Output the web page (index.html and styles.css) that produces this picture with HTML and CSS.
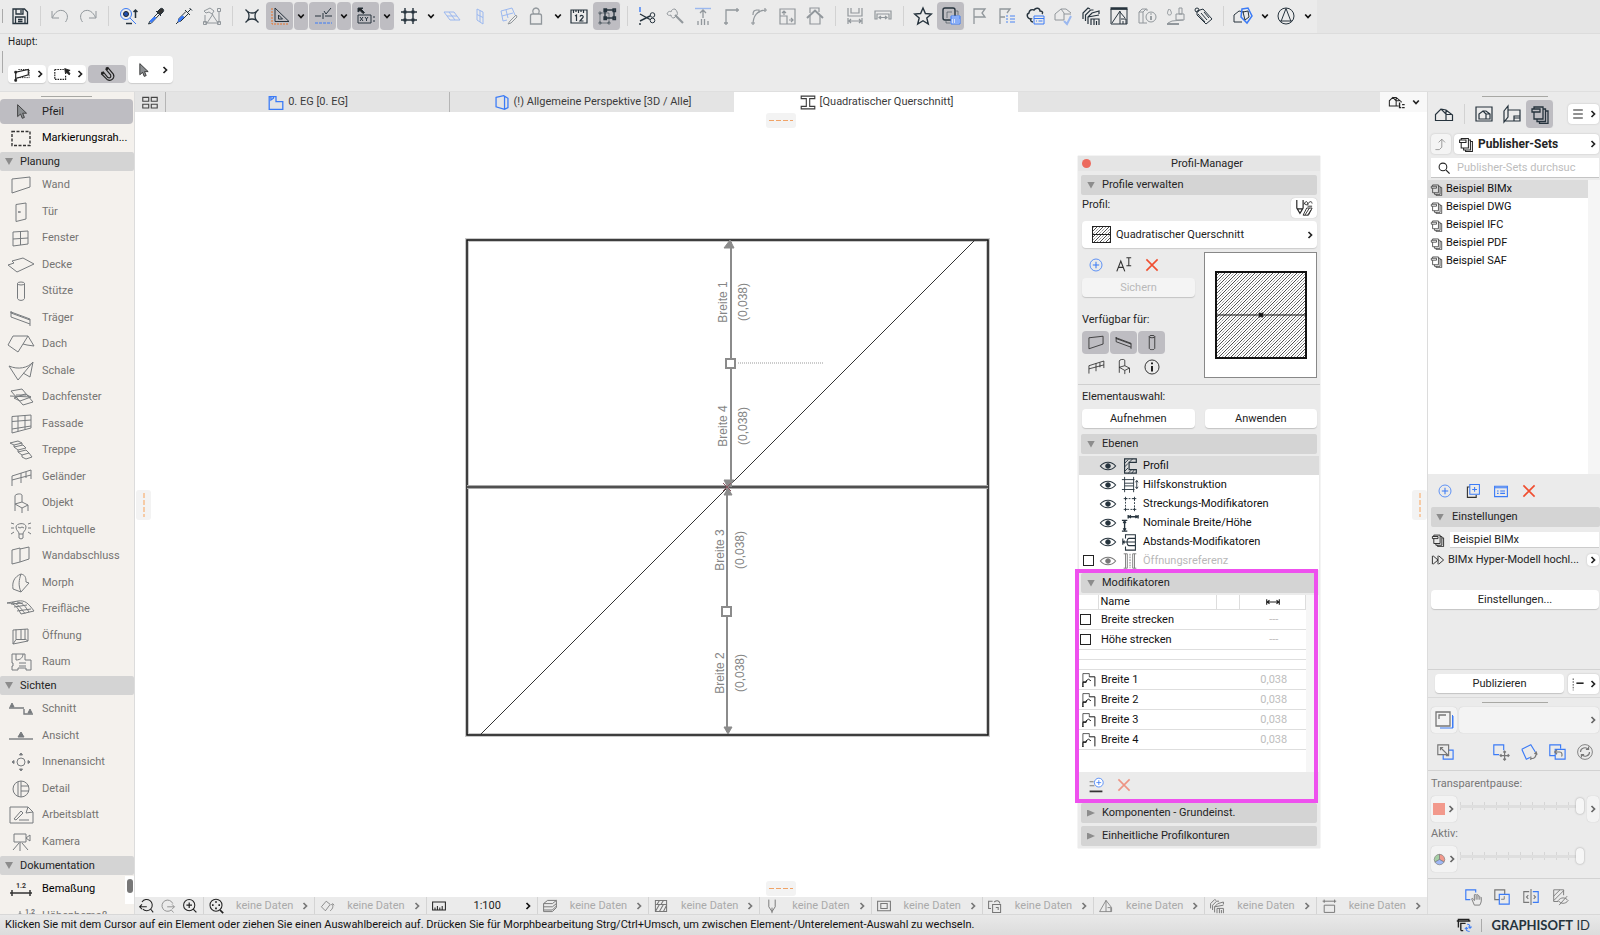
FILE: index.html
```html
<!DOCTYPE html>
<html lang="de">
<head>
<meta charset="utf-8">
<title>Profil-Manager</title>
<link rel="stylesheet" href="styles.css">
</head>
<body>
<svg class="defs" aria-hidden="true">
  <defs>
    <pattern id="hatch" width="6" height="6" patternUnits="userSpaceOnUse"><path d="M-1 7 7-1M-1 1 1-1M5 7 7 5" stroke="#222" stroke-width=".8"/><path d="M-1 4 4-1M2 7 7 2" stroke="#444" stroke-width=".7" stroke-dasharray="2 1.2"/></pattern>
    <symbol id="chev-d" viewBox="0 0 8 8"><path d="M1.2 2.5 4 5.5 6.8 2.5" stroke-width="1.7"/></symbol>
    <symbol id="chev-r" viewBox="0 0 8 8"><path d="M2.5 1 5.5 4 2.5 7" stroke-width="1.7"/></symbol>
    <symbol id="save" viewBox="0 0 20 20"><path d="M3 3h11.500l3 3v11.500H3zM6 3v5h7V3M11 4v3M5.500 17.500V11h9.500v6.500M8 13.500h4.500M8 15.500h4.500" stroke-width="1.300"/></symbol>
    <symbol id="undo" viewBox="0 0 20 20"><path d="M2 5v7h7M2.500 11.500C5 6 9 3 14 5c4 2.500 4.500 7 1.500 11"/></symbol>
    <symbol id="redo" viewBox="0 0 20 20"><path d="M18 5v7h-7M17.500 11.500C15 6 11 3 6 5c-4 2.500-4.500 7-1.500 11"/></symbol>
    <symbol id="findsel" viewBox="0 0 20 20"><circle cx="8" cy="8" r="5.500" class="b"/><circle cx="8" cy="8" r="2.500" fill="#1f4fae" stroke="#222"/><path class="b" d="m12 12 6 6"/><path d="M8 17.500h6M17.500 5v7M15.500 6l2-2 2 2M7 17.500v.1" stroke-width="1.500"/></symbol>
    <symbol id="pick" viewBox="0 0 20 20"><path d="m11 6 3-3c2-2 5 1 3 3l-3 3z" fill="#333"/><path d="M10 5l5 5M12 7l-8 8-1.500 3 3-1L13 9"/><path d="m4 15 4-4 2 1-5 4.500z" fill="#3b7bf6" stroke="#3b7bf6"/></symbol>
    <symbol id="inject" viewBox="0 0 20 20"><path d="m13 7 4-4M15.500 2l2.500 2.500M11 4l5 5M12 5.500l-7 7L4 16l3-1 7-7M4 16l-2 2"/><path d="m5 13 3-3 2 1-4 4-1.500.5z" fill="#3b7bf6" stroke="#3b7bf6"/></symbol>
    <symbol id="hammerbox" viewBox="0 0 20 20"><path d="M3 17V9M17 5v12H3M5 17l6-9M2 5l6-3 4 3-2 3-3-2-3 1zM10 8l6 9M15.500 2.500h3v3h-3zM1.500 15.500h3v3h-3zM15.500 15.500h3v3h-3z"/></symbol>
    <symbol id="snap" viewBox="0 0 20 20"><path d="M6 6q4 2 8 0-2 4 0 8-4-2-8 0 2-4 0-8z" stroke-width="1.300"/><path d="m3.500 3.500 3 3M16.500 3.500l-3 3M3.500 16.500l3-3M16.500 16.500l-3-3" stroke-width="1.300"/></symbol>
    <symbol id="tri" viewBox="0 0 20 20"><path d="M5 2v13.500h14zM8.500 9v4h4z"/><path d="M2 2v16h16" stroke="#e8742c" stroke-dasharray="2 1"/></symbol>
    <symbol id="guide" viewBox="0 0 20 20"><path d="M2 10h6M12 10h7M10 7v6M11 5l2 3 5-6"/><path class="b" d="M2 17h17" stroke-dasharray="3 1"/></symbol>
    <symbol id="coord" viewBox="0 0 20 20"><path d="M2 2h5L5.500 3.500l3 3-1.500 1-3-3L2 6z" fill="#222"/><path d="M2 9h13v8H2zM4 11l3 4M7 11l-3 4M9 11l1.500 2 1.500-2M10.500 13v2M17 11h2M17 15h2"/></symbol>
    <symbol id="grid" viewBox="0 0 20 20"><path d="M6 2v16M14 2v16M2 6h16M2 14h16" stroke-width="1.400"/><path d="M4.500 6h3M12.500 6h3M4.500 14h3M12.500 14h3" stroke-width="3"/></symbol>
    <symbol id="plane" viewBox="0 0 20 20"><path class="b" d="M2 6h10l6 8H8zM5 10h10M7 6l6 8"/></symbol>
    <symbol id="vplane" viewBox="0 0 20 20"><path class="b" d="M7 3l6 3v12l-6-4zM10 4.500V16M7 8.500l6 3"/></symbol>
    <symbol id="eplane" viewBox="0 0 20 20"><path class="b" d="M3 5l11-3 3 7M3 5l2 10 4-1M4 10l11-3M8 4l2 8"/><path d="m18 9-6 6-2 3 3-1 6-6z"/></symbol>
    <symbol id="stamp" viewBox="0 0 20 20"><path d="M8 8C5.500 6 7 2 10 2s4.500 4 2 6M4.500 10q0-2 2-2h7q2 0 2 2v8h-11z" stroke-width="1.300"/></symbol>
    <symbol id="ruler" viewBox="0 0 20 20"><path d="M2 4h16v13H2zM4.500 4v3M7 4v2M9.500 4v3M12 4v2M14.500 4v3M6 10l1.500-1v6M11 10.500c1-2 4-1 3 1L11 15h3.500" stroke-width="1.200"/></symbol>
    <symbol id="groups" viewBox="0 0 20 20"><path opacity=".5" d="M3 7h9v10H3zM2 6h2v2H2zM2 16h2v2H2zM11 16h2v2h-2z"/><path d="M8 4h9v8H8zM7 3h2.500v2.500H7zM16 3h2.500v2.500H16zM7 11h2.500v2.500H7zM16 11h2.500v2.500H16z" stroke-width="1.300"/></symbol>
    <symbol id="scissors" viewBox="0 0 20 20"><path class="b" d="M3 1v5" stroke-width="1.400"/><path d="m3 8 10 5.500M3 15l10-5M3 17v2" stroke-width="1.400"/><circle cx="15.500" cy="9" r="2.300"/><circle cx="15.500" cy="14.500" r="2.300"/></symbol>
    <symbol id="axe" viewBox="0 0 20 20"><path d="M2 8c1-3 3-3 4-2 0-2 2-3 4-3 2 2 3 4 2 6l-3 3c-2 0-3-1-3-3-2 1-3 0-4-1z"/><path d="m10 9 8 8" stroke-width="2.200"/></symbol>
    <symbol id="adjust" viewBox="0 0 20 20"><path class="b" d="M2 2.500h16" stroke-width="1.400"/><path d="M10 4v8M7 7l3-3 3 3M5 15v4M8.500 13v6M11.500 13v6M15 15v4" stroke-width="1.300"/></symbol>
    <symbol id="corner" viewBox="0 0 20 20"><path d="M5 19V4h13M3 17h4M16 2v4" stroke-width="1.300"/></symbol>
    <symbol id="fillet" viewBox="0 0 20 20"><path d="M4 19c0-9 4-15 14-15M2 17h4M16 2v4M4 9c0-4 1-5 5-5M10 7V4H7" stroke-width="1.200"/></symbol>
    <symbol id="resize" viewBox="0 0 20 20"><path d="M3 3h15v15H3zM3 10h7v8M7 9V5M5 7l2-2 2 2M12 14h4M14 12l2 2-2 2" stroke-width="1.200"/></symbol>
    <symbol id="home" viewBox="0 0 20 20"><path d="M2 12 10 4.500l8 7.500" stroke-width="2"/><path d="M5 10v8h10v-8M5 7V2h9v4" stroke-width="1.200"/></symbol>
    <symbol id="dimw" viewBox="0 0 20 20"><path d="M3 2v8h14V2M6 2v5h8V2M3 12v6M17 12v6M4 15h12M6 13l-2 2 2 2M14 13l2 2-2 2" stroke-width="1.200"/></symbol>
    <symbol id="dimi" viewBox="0 0 20 20"><path d="M2 5h16v8h-2V8H4v5H2zM6 11.500h8M8 10 6 11.500l2 1.500M12 10l2 1.500-2 1.500" stroke-width="1.200"/></symbol>
    <symbol id="star" viewBox="0 0 20 20"><path d="m10 2 2.400 5.500 6 .5-4.600 3.900L15.300 18 10 14.700 4.700 18l1.500-6.100L1.600 8l6-.5z" stroke-width="1.400"/></symbol>
    <symbol id="layers" viewBox="0 0 20 20"><path opacity=".5" d="M6 6h5M6 6v6M15 5h2v4M5 15v2h4"/><rect x="2" y="2" width="12" height="12" rx="2" stroke-width="1.400"/><path class="b" d="M10 10h9v8h-9z" fill="#d6e0fa"/><path class="b" d="M10 12h9M12 14h1M14 14h4M12 16h1M14 16h4"/></symbol>
    <symbol id="flag" viewBox="0 0 20 20"><path d="M5 18V3h11l-3 4 3 4H5" stroke-width="1.300"/></symbol>
    <symbol id="flagl" viewBox="0 0 20 20"><path d="M3 18V3h10l-3 4M3 11h5" stroke-width="1.300"/><path class="b" d="M9 10h2M13 10h5M9 13h2M13 13h5M9 16h2M13 16h5" stroke-width="1.800"/></symbol>
    <symbol id="cloud" viewBox="0 0 20 20"><path d="M8 16c-2 0-3-2-2-3-4 0-5-5-2-6 0-3 3-4 5-3 2-3 6-2 6 1 3 0 3 2 2 3" stroke-width="1.400"/><path class="b" d="M9 10h10v8H9zM9 12.500h10M11 15h1M13.500 15h4"/></symbol>
    <symbol id="house" viewBox="0 0 20 20"><path d="M1.500 16.500v-6L7 5l5 5v6.500zM7 5l5 1 6.500 5v5.500H12M12 10.500h6.500M12 6l0 4" stroke-width="1.200"/></symbol>
    <symbol id="housec" viewBox="0 0 20 20"><path d="M2 14V8l6-5 3 4v7zM8 3l5 0 5 4M11 8h7"/><path class="b" d="m11 15 3 3 4-8" stroke-width="2"/></symbol>
    <symbol id="stackh" viewBox="0 0 20 20"><path d="M2 13V7l5-5 2 1M4.500 15V9l5-5 3 0M7 18v-7l4-4 7-2v3M7 11l11-2M10 19v-6h8v6M13 13v6M15.500 15v4" stroke-width="1.200"/></symbol>
    <symbol id="frameh" viewBox="0 0 20 20"><path d="M2 3h16v15H2zM3 17 11 5v13M11 6l5 6M12 13h5v5M14 15v3"/><path d="M1.500 2.500h17" stroke-width="2.500"/></symbol>
    <symbol id="info3d" viewBox="0 0 20 20"><path d="M2 6l3-3h5v2M2 6v11h8M2 6h4v11M6 6l3-3"/><circle cx="14" cy="11" r="5"/><path d="M14 10v4M14 7.500v1" stroke-width="1.800"/></symbol>
    <symbol id="brush" viewBox="0 0 20 20"><path d="M4 3C2 6 2 9 4.500 9S7 6 4.500 3M14 2h3v6h-3zM11 8h8v6h-8zM3 17l4-2 11-1"/><path d="M2 18h12" stroke-width="2"/></symbol>
    <symbol id="tag" viewBox="0 0 20 20"><path d="M4 5l6-2 9 10-6 5-9-9zM5 8l7 8M8 7l6 7M11 6l5 6"/><circle cx="4" cy="4" r="2"/></symbol>
    <symbol id="sheet" viewBox="0 0 20 20"><path d="M1 16V9l5-4 5 1M1 16h8"/><path class="b" d="m9 3 6-1 4 8-5 7-6-6z" stroke-width="1.500"/><path d="m10 6 5-1 1 6-4 3z"/></symbol>
    <symbol id="circtri" viewBox="0 0 20 20"><circle cx="10" cy="10" r="8"/><path d="m10 2.500-5 13M10 2.500l5 13M4 15h12"/></symbol>
    <symbol id="cursor" viewBox="0 0 20 20"><path d="M6 2v14l3.500-3 2 5 2.500-1-2-5h4.500z" fill="#8b8e91"/></symbol>
    <symbol id="poly" viewBox="0 0 20 20"><path d="M3 17V8l14-3v6L3 15" stroke-width="1.300"/><path d="M6 5h12v9H5" stroke-dasharray="1.500 1"/><path d="M2 16h2v2H2zM2 7h2v2H2z" fill="#222"/></symbol>
    <symbol id="boxsel" viewBox="0 0 20 20"><path d="M2 5h10M2 5v11h12v-5" stroke-dasharray="1.800 1" stroke-width="1.300"/><path d="m13 4 6 2-2 1 2 3-1 1-3-3-1 2z" fill="#222"/></symbol>
    <symbol id="magnet" viewBox="0 0 20 20"><path d="m4 10 6 6c5 3 9-2 7-6l-6-7-2 2 5 6c1 3-1 4-3 3L6 8z" stroke-width="1.300"/><path d="M9 3h2v2H9zM4 8h2v2H4z" fill="#222"/></symbol>
    <symbol id="win4" viewBox="0 0 20 20"><path d="M1.500 4h7v4.500h-7zM11.500 4h7v4.500h-7zM1.500 12h7v4.500h-7zM11.500 12h7v4.500h-7z" stroke-width="1.300"/></symbol>
    <symbol id="plan" viewBox="0 0 20 20"><path class="b" d="M2 3h8v6h8v9H2zM4 3v4l3-2V3" stroke-width="1.500"/></symbol>
    <symbol id="box3" viewBox="0 0 20 20"><path class="b" d="M3 4l9-2 5 3v11l-4 2-10-3zM13 3v15" stroke-width="1.500"/></symbol>
    <symbol id="ibeam" viewBox="0 0 20 20"><path d="M2 2.500h16v3h-6v9h6v3H2v-3h6v-9H2z" stroke-width="1.300"/></symbol>
    <symbol id="hmap" viewBox="0 0 20 20"><path d="M1 14V8l4-4 4 4v6zM5 4l4 0 6 5v1M9 4v4h4M9 14h3" stroke-width="1.200"/><path d="M13 10v6h2M16 12.500h3M16 16h3" stroke-width="1.600"/></symbol>
    <symbol id="books" viewBox="0 0 20 20"><path d="M4 8v7h9V3H4v2M13 5h2.500v12.500H7V15M15.500 7H18v12.500H9.500v-2M2 5h8v3H2z" stroke-width="1.300"/></symbol>
    <symbol id="framed" viewBox="0 0 20 20"><path d="M2 3h16v14H2zM5 15v-5l4-3 3 3v5zM9 7h3l4 3v5h-4M12 10h4" stroke-width="1.200"/></symbol>
    <symbol id="layout" viewBox="0 0 20 20"><path d="M2 7l4-5v11l-4 5zM6 6h12v11H2M12 17v-5h6M12 14h6" stroke-width="1.200"/></symbol>
    <symbol id="burger" viewBox="0 0 20 20"><path d="M4 5h12M4 10h12M4 15h12" stroke-width="1.300"/></symbol>
    <symbol id="uparr" viewBox="0 0 20 20"><path d="M3 17h5l3-3V4M7 8l4-4 4 4"/></symbol>
    <symbol id="mag" viewBox="0 0 20 20"><circle cx="8.500" cy="8.500" r="5.500" stroke-width="1.500"/><path d="m13 13 5 5" stroke-width="1.800"/></symbol>
    <symbol id="plusc" viewBox="0 0 20 20"><g class="b"><circle cx="10" cy="10" r="7.500"/><path d="M10 6v8M6 10h8" stroke-width="1.300"/></g></symbol>
    <symbol id="plus2" viewBox="0 0 20 20"><path d="M6 5H3v13h11v-3" stroke-width="1.400"/><path class="b" d="M6 2h12v12H6zM12 5v6M9 8h6" stroke-width="1.300"/></symbol>
    <symbol id="listb" viewBox="0 0 20 20"><path class="b" d="M2 4h16v13H2zM2 6h16M5 10h2M9 10h6M5 13h2M9 13h6" stroke-width="1.400"/></symbol>
    <symbol id="redx" viewBox="0 0 20 20"><path d="M3 3 17 17M17 3 3 17" stroke="#f04e30" stroke-width="2"/></symbol>
    <symbol id="ff" viewBox="0 0 20 20"><path d="M2 4v12M3 4l7 6-7 6M10 4v12M11 4l7 6-7 6" stroke-width="1.300"/></symbol>
    <symbol id="listdots" viewBox="0 0 20 20"><path d="M4 3v15" stroke-dasharray="2 1.500"/><path d="M8 9h9" stroke-width="2"/></symbol>
    <symbol id="trace" viewBox="0 0 20 20"><path class="b" d="M6 18h13V6M18.500 5v13"/><path d="M2 2h14v14H2zM5 9V5h7" stroke-width="1.300"/></symbol>
    <symbol id="tswap" viewBox="0 0 20 20"><path class="b" d="M14 8h5v10H8v-5" stroke-width="1.300"/><path d="M2 2h12v11H2zM5 5l9 9M5 8V5h3M14 11v3h-3" stroke-width="1.300"/></symbol>
    <symbol id="tmove" viewBox="0 0 20 20"><path class="b" d="M13 8V2H2v11h6" stroke-width="1.300"/><path d="M14 9v10M9 14h10M12.500 10.500 14 9l1.500 1.500M12.500 17.500 14 19l1.500-1.500M10.500 12.500 9 14l1.500 1.500M17.500 12.500 19 14l-1.500 1.500" stroke-width="1.300"/></symbol>
    <symbol id="trot" viewBox="0 0 20 20"><path class="b" d="m2 7 10-5 5 8M2 7l5 11 4-2" stroke-width="1.300"/><path d="M12 17c4 1 6-2 6-6M12 15v4M16 12l2-2 1 3" stroke-width="1.300"/></symbol>
    <symbol id="tback" viewBox="0 0 20 20"><path class="b" d="M14 6V2H2v12h6M8 7h11v11H8z" stroke-width="1.300"/><path d="M8 10h5c3 0 3 4 2 5M10 7.500 7.500 10l2.500 2.500" stroke-width="1.300"/></symbol>
    <symbol id="tsync" viewBox="0 0 20 20"><circle cx="10" cy="10" r="8.200"/><path d="M5 10c0-5 6-6 9-3M14 4v3h-3M15 10c0 5-6 6-9 3M6 16v-3h3" stroke-width="1.300"/></symbol>
    <symbol id="thand" viewBox="0 0 20 20"><path class="b" d="M13 5V2H2v11h5" stroke-width="1.300"/><path d="M8.500 12l3 7h6c2-3 2-6 1.500-9M8.500 12c1-1 2 0 3 2V7.500c1-1 2 0 2 1V13M13.500 8c1-1 2-1 2 0v5M15.500 9c1-1 2 0 2 1v3"/></symbol>
    <symbol id="tdup" viewBox="0 0 20 20"><path d="M7 13H2V2h11v5" stroke-width="1.300"/><path class="b" d="M7 7h11v11H7z" stroke-width="1.300"/><path d="M12.500 9v3.500H9"/></symbol>
    <symbol id="tsplit" viewBox="0 0 20 20"><path class="b" d="M12 4h6v12h-6" stroke-width="1.300"/><path d="M8 4H2v12h6M10 1v18M7 8l-2 2 2 2M13 8l2 2-2 2" stroke-width="1.200"/></symbol>
    <symbol id="thide" viewBox="0 0 20 20"><path d="M14 2H3v13h5M14 2v6M3 9l7-7M3 14 14 3M8 14c3-4 8-4 11 0-3 4-8 4-11 0zM9 19l9-10"/></symbol>
    <symbol id="wheel" viewBox="0 0 20 20"><path d="M10 10V2a8 8 0 0 0-7 12z" fill="#a5cfa5"/><path d="M10 10V2a8 8 0 0 1 7 12z" fill="#f2998c"/><path d="M10 10 3 14a8 8 0 0 0 14 0z" fill="#9fb8f5"/></symbol>
    <symbol id="rename" viewBox="0 0 20 20"><path d="m1 18 5-13 5 13M3 13h6" stroke-width="1.400"/><path d="M13 1h6M13 11h6M16 1v10" stroke-width="1.300"/></symbol>
    <symbol id="pencil2" viewBox="0 0 20 20"><path d="M2 1v9l3.500 6L9 10V1M2 11h7" stroke-width="1.300"/><path d="M10 6c2-5 4-3 4-1s-3 2-3 0M14 7c1-5 5-5 5-2M14 8h5M9 18l4-8h6l-4 8zM11 18l5-8M14 18l4-6"/></symbol>
    <symbol id="ico-info" viewBox="0 0 20 20"><circle cx="10" cy="10" r="7.800"/><path d="M10 9v6M10 5v2" stroke-width="2.200"/></symbol>
    <symbol id="eye" viewBox="0 0 20 20"><path d="M1.500 10C6 4.500 14 4.500 18.500 10 14 15.500 6 15.500 1.500 10z" stroke-width="1.200"/><circle cx="10" cy="10" r="2.600" fill="currentColor"/></symbol>
    <symbol id="l-prof" viewBox="0 0 20 20"><path d="M4 2h13v4H9v8h8v4H4z" stroke-width="1.300"/><path d="m4 7 4-4M4 11l4-4M4 16l4-4M9 6l4-4M8 18l4-4M12 18l3-4"/></symbol>
    <symbol id="l-help" viewBox="0 0 20 20"><path d="M4 1v17M1 4h14M1 15h14M14 1v17M4 8h10M4 11h10M17.500 5v9M16 7l1.500-2L19 7M16 12l1.500 2 1.500-2"/></symbol>
    <symbol id="l-str" viewBox="0 0 20 20"><path d="M5 4h10v12H5z" stroke-dasharray="2 1.500"/><path d="M3 4h4M5 2v4M13 4h4M15 2v4M3 16h4M5 14v4M13 16h4M15 14v4"/></symbol>
    <symbol id="l-nom" viewBox="0 0 20 20"><path d="M8 1v4M19 1v4M9 3h9M11 1.500 9 3l2 1.500M16 1.500 18 3l-2 1.500M1 7h6M1 19h6M4 8v10M2.500 10l1.500-2L5.500 10M2.500 16l1.500 2 1.500-2" stroke-width="1.500"/></symbol>
    <symbol id="l-abs" viewBox="0 0 20 20"><path d="M5 6V2h11v17H5v-4M2 6v7M2 10h14M16 6H9c-3 0-3 8 0 8h7M4 8.500 2 10l2 1.500" stroke-width="1.200"/></symbol>
    <symbol id="l-open" viewBox="0 0 20 20"><path d="M5 2v16M7 2v16M13 2v16M15 2v16M3 2h4M3 18h4M13 2h4M13 18h4" /><path d="M10 2v16" stroke-dasharray="2 1"/></symbol>
    <symbol id="hdim" viewBox="0 0 20 20"><path d="M1 6v8M19 6v8M2 10h16M5 7.500 2 10l3 2.500M15 7.500 18 10l-3 2.500" stroke-width="1.600"/></symbol>
    <symbol id="m-flag" viewBox="0 0 20 20"><path d="M3 17V2h8v4M3 12h5" opacity=".7" stroke-width="1.200"/><path d="M2 18h2M11 6h7v12M3 18v-5h4v-2l3-2 3 2" stroke-width="1.200"/></symbol>
    <symbol id="m-add" viewBox="0 0 20 20"><path d="M2 6h5M2 11h6" opacity=".6" stroke-width="1.400"/><path d="M2 18h16" stroke-width="2.200"/><g class="b"><circle cx="13.500" cy="7" r="5.500" fill="#fff"/><path d="M13.500 4v6M10.500 7h6"/></g></symbol>

    <symbol id="t-marq" viewBox="0 0 28 20"><path d="M5 3.500h18v14H5z" stroke-dasharray="3 1.500" stroke-width="1.400"/></symbol>
    <symbol id="t-wall" viewBox="0 0 28 20"><path d="M5 4l18-2v10L5 18z"/></symbol>
    <symbol id="t-door" viewBox="0 0 28 20"><path d="M9 2.500 19 1v16l-10 2.500zM11 10h3M12 9v2"/></symbol>
    <symbol id="t-win" viewBox="0 0 28 20"><path d="M6 4l15-1v13l-15 2zM13.500 3.500v13.500M6 11l15-1"/></symbol>
    <symbol id="t-slab" viewBox="0 0 28 20"><path d="m1 10 6-2-2-2 11-3 11 6-17 8z"/></symbol>
    <symbol id="t-col" viewBox="0 0 28 20"><ellipse cx="14" cy="2.500" rx="3.500" ry="1.500"/><path d="M10.500 2.500v15c1 2.500 6 2.500 7 0v-15"/></symbol>
    <symbol id="t-beam" viewBox="0 0 28 20"><path d="M4 4v5l19 7v-5zM4 5l19 7M3 4h2M22 17h2"/></symbol>
    <symbol id="t-roof" viewBox="0 0 28 20"><path d="M6 2h15L11 18 1 11zM21 2l6 10-7-1-4-1"/></symbol>
    <symbol id="t-shell" viewBox="0 0 28 20"><path d="M2 5c9 4 19 2 24-4L11 19zM26 1l-3 15-7-4"/></symbol>
    <symbol id="t-sky" viewBox="0 0 28 20"><path d="m4 4 11-2 11 13-10 3zM7 11 18 7l6 3-11 4zM9 8l10 0M3 9l21 1"/></symbol>
    <symbol id="t-curt" viewBox="0 0 28 20"><path d="M5 2.500 24 1v13L5 19zM11 2v15.500M18 1.500v14M5 7.500l19-1.500M5 15l19-3"/></symbol>
    <symbol id="t-stair" viewBox="0 0 28 20"><path d="m3 3 8-2 4 2-8 2zM7 5v2l9-2 3 3-8 2-4-3M11 10v2l8-2 3 3-7 2-4-3M15 15v2l4 2 6-2-3-4M15 3v2"/></symbol>
    <symbol id="t-rail" viewBox="0 0 28 20"><path d="M5 19V9l19-6v9M5 13l19-5M14 6v10M19 5v6"/></symbol>
    <symbol id="t-chair" viewBox="0 0 28 20"><path d="M8 18V3c0-2 6-3 7-1v7M8 11l7-2 6 3-6 3zM15 15v5M21 12v6"/></symbol>
    <symbol id="t-light" viewBox="0 0 28 20"><path d="M12 14c0-3-3-3-3-7s10-5 10 0c0 4-3 4-3 7zM12 14v4l2 1 2-1v-4M11 7l2 1 2-1 2 1M4 3l3 1M4 8h3M4 14l3-2M24 3l-3 1M24 8h-3M24 14l-3-2"/></symbol>
    <symbol id="t-wend" viewBox="0 0 28 20"><path d="M5 4l8-2v14l-8 2zM13 3l9-2v12l-9 3"/></symbol>
    <symbol id="t-morph" viewBox="0 0 28 20"><path d="M14 1C7 4 5 9 6 16l8 3c-3-7-2-12 0-18zM14 1c4 1 5 3 5 8l3 1-8 9"/></symbol>
    <symbol id="t-mesh" viewBox="0 0 28 20"><path d="M0 4c5 0 9 1 14 11l13-3C21 4 18 1 11 2zM5 3.500c6 1 8 5 13 11M4 5l12-1M7 8l13-2M10 12l14-2M10 3c6 1 8 4 12 10"/></symbol>
    <symbol id="t-open" viewBox="0 0 28 20"><path d="M6 4l15-1v12l-15 3zM9 3.500v10h9V3M9 13.500 6 18M18 13l3 2M14 3.500v10"/></symbol>
    <symbol id="t-room" viewBox="0 0 28 20"><path d="M5 2h13v6h6v10h-5v-2h-8v2H5v-4h1v-3H5zM9 2v6c5 0 7-3 7-6M12 11h7M12 14h7"/></symbol>
    <symbol id="t-sec" viewBox="0 0 28 20"><path d="M2 9h15M17 10v5h9" stroke-width="1.400"/><path d="m3 8 2-4 2 4zM21 14l2-4 2 4z" fill="currentColor"/></symbol>
    <symbol id="t-elev" viewBox="0 0 28 20"><path d="M2 13h24" stroke-width="1.400"/><path d="m11 11 3-5 3 5z" fill="currentColor"/></symbol>
    <symbol id="t-int" viewBox="0 0 28 20"><circle cx="14" cy="10" r="4"/><path d="m12.500 3 1.500-2 1.500 2zM12.500 17l1.500 2 1.500-2zM7 8.500 5 10l2 1.500zM21 8.500l2 1.500-2 1.500z" fill="currentColor"/></symbol>
    <symbol id="t-det" viewBox="0 0 28 20"><circle cx="14" cy="10" r="8"/><path d="M11 3v14M14 2v16M14 7h8M14 12h8"/></symbol>
    <symbol id="t-work" viewBox="0 0 28 20"><path d="M3 2h18l5 5v11H3zM21 2l-2 6 7-1M7 14l7-8 2 2-7 7zM12 15h10"/></symbol>
    <symbol id="t-cam" viewBox="0 0 28 20"><path d="M7 2h12v8H7zM19 6l4-3v6zM13 10v9M12 11l-6 7M15 11l6 7"/></symbol>
    <symbol id="t-dim" viewBox="0 0 28 20"><path d="M3 14h22M5 11v6M23 11v6" stroke-width="1.500"/></symbol>
    <symbol id="t-lvl" viewBox="0 0 28 20"><circle cx="13" cy="14" r="6"/><path d="M13 5v15M5 14h16"/></symbol>

    <symbol id="v-back" viewBox="0 0 20 20"><path d="M5 5a7 7 0 1 1 1 9M2 11h9M5 8l-3 3 3 3M16 14l3 4" stroke-width="1.300"/></symbol>
    <symbol id="v-fwd" viewBox="0 0 20 20"><path d="M14 15a7 7 0 1 1 2-8M9 11h9M15 8l3 3-3 3M14 15l3 3" stroke-width="1.200"/></symbol>
    <symbol id="v-zoom" viewBox="0 0 20 20"><circle cx="9" cy="9" r="7" stroke-width="1.300"/><path d="M9 5.500v7M5.500 9h7M14 14l4 4" stroke-width="1.500"/></symbol>
    <symbol id="v-fit" viewBox="0 0 20 20"><circle cx="10" cy="9" r="7.500" stroke-width="1.300"/><path d="M10 4v2M10 12v2M5 9h2M13 9h2M15 15l4 4" stroke-width="2.200"/></symbol>
    <symbol id="v-rot" viewBox="0 0 20 20"><path d="m3 11 6-7 5 4-6 8zM14 16c3-2 4-5 3-8M15 9l2-2 2 2"/></symbol>
    <symbol id="v-scale" viewBox="0 0 20 20"><path d="M2 5h16v10H2zM5 12v3M8 10v5M11 12v3M14 10v5" stroke-width="1.300"/></symbol>
    <symbol id="v-lay" viewBox="0 0 20 20"><path d="m2 7 5-4h11l-5 4zM2 11l11 0 5-4M2 15h11l5-5M2 7v10h11l5-5V3" stroke-width="1.200"/></symbol>
    <symbol id="v-hatch" viewBox="0 0 20 20"><path d="M3 3h14v14H3zM3 8h14M5 8l3-5M10 8l3-5M3 17l5-9M8 17l5-9M13 17l4-8" stroke-width="1.300"/></symbol>
    <symbol id="v-pen" viewBox="0 0 20 20"><path d="M6 2v9l4 6 4-6V2M10 12v7" stroke-width="1.200"/></symbol>
    <symbol id="v-frame" viewBox="0 0 20 20"><path d="M2 4h16v12H2zM6 7h8v6H6z" stroke-width="1.300"/></symbol>
    <symbol id="v-rep" viewBox="0 0 20 20"><path d="M7 8h10v10H7zM7 4H2v9h3M9 5c4-3 7-1 7 2M11 12h3v3" stroke-width="1.300"/></symbol>
    <symbol id="v-ren" viewBox="0 0 20 20"><path d="M2 17 10 3l7 9v5zM10 3v14M12 12h4v5"/></symbol>
    <symbol id="v-dim" viewBox="0 0 20 20"><path d="M4 9h13v9H4zM2 4h17M4 2v4M17 2v4" stroke-width="1.200"/></symbol>
    <symbol id="conn" viewBox="0 0 20 20"><path d="M3 13V3h13v3M1 5h17M6 17V8h6M6 17h3" stroke-width="1.700"/><path class="b" d="M14 9c3 0 4 2 3 5M15.500 12l2 2 2-2M17 18c-3 0-5-1-4-4M15 15l-2-2-2 2" stroke-width="1.300"/></symbol>
  </defs>
</svg>

<div class="app">
  <header class="topbar">
    <div class="tools" role="toolbar" aria-label="Standard">
      <i class="grip"></i>
      <button class="tb" aria-label="Sichern"><svg><use href="#save"/></svg></button>
      <i class="sep"></i>
      <button class="tb off" aria-label="Rückgängig"><svg><use href="#undo"/></svg></button>
      <button class="tb off" aria-label="Wiederholen"><svg><use href="#redo"/></svg></button>
      <i class="sep"></i>
      <button class="tb" aria-label="Suchen"><svg><use href="#findsel"/></svg></button>
      <button class="tb" aria-label="Aufnehmen"><svg><use href="#pick"/></svg></button>
      <button class="tb" aria-label="Übertragen"><svg><use href="#inject"/></svg></button>
      <button class="tb off" aria-label="Bearbeiten"><svg><use href="#hammerbox"/></svg></button>
      <i class="sep"></i>
      <button class="tb" aria-label="Fang"><svg><use href="#snap"/></svg></button>
      <button class="tb on" aria-label="Hilfslinien"><svg><use href="#tri"/></svg></button>
      <button class="tb dd on" aria-label="Mehr"><svg><use href="#chev-d"/></svg></button>
      <button class="tb on" aria-label="Fangpunkte"><svg><use href="#guide"/></svg></button>
      <button class="tb dd on" aria-label="Mehr"><svg><use href="#chev-d"/></svg></button>
      <button class="tb on" aria-label="Koordinaten"><svg><use href="#coord"/></svg></button>
      <button class="tb dd on" aria-label="Mehr"><svg><use href="#chev-d"/></svg></button>
      <button class="tb" aria-label="Raster"><svg><use href="#grid"/></svg></button>
      <button class="tb dd" aria-label="Mehr"><svg><use href="#chev-d"/></svg></button>
      <button class="tb off" aria-label="Ebene"><svg><use href="#plane"/></svg></button>
      <button class="tb off" aria-label="Vertikale Ebene"><svg><use href="#vplane"/></svg></button>
      <button class="tb off" aria-label="Ebene bearbeiten"><svg><use href="#eplane"/></svg></button>
      <button class="tb off" aria-label="Schwerkraft"><svg><use href="#stamp"/></svg></button>
      <button class="tb dd" aria-label="Mehr"><svg><use href="#chev-d"/></svg></button>
      <button class="tb" aria-label="Messen"><svg><use href="#ruler"/></svg></button>
      <button class="tb on" aria-label="Gruppen"><svg><use href="#groups"/></svg></button>
      <i class="sep"></i>
      <button class="tb" aria-label="Trennen"><svg><use href="#scissors"/></svg></button>
      <button class="tb off" aria-label="Aufteilen"><svg><use href="#axe"/></svg></button>
      <button class="tb off" aria-label="Anpassen"><svg><use href="#adjust"/></svg></button>
      <button class="tb off" aria-label="Verschneiden"><svg><use href="#corner"/></svg></button>
      <button class="tb off" aria-label="Abrunden"><svg><use href="#fillet"/></svg></button>
      <button class="tb off" aria-label="Größe"><svg><use href="#resize"/></svg></button>
      <button class="tb off" aria-label="Dach"><svg><use href="#home"/></svg></button>
      <i class="sep"></i>
      <button class="tb off" aria-label="Bemaßung außen"><svg><use href="#dimw"/></svg></button>
      <button class="tb off" aria-label="Bemaßung innen"><svg><use href="#dimi"/></svg></button>
      <i class="sep"></i>
      <div class="spread">
        <button class="tb" aria-label="Favoriten"><svg><use href="#star"/></svg></button>
        <button class="tb on" aria-label="Ebenen"><svg><use href="#layers"/></svg></button>
        <button class="tb off" aria-label="Markierung"><svg><use href="#flag"/></svg></button>
        <button class="tb off" aria-label="Markierungsliste"><svg><use href="#flagl"/></svg></button>
        <button class="tb" aria-label="Cloud"><svg><use href="#cloud"/></svg></button>
        <button class="tb off" aria-label="Modellprüfung"><svg><use href="#housec"/></svg></button>
        <button class="tb" aria-label="Varianten"><svg><use href="#stackh"/></svg></button>
        <button class="tb" aria-label="Bild"><svg><use href="#frameh"/></svg></button>
        <button class="tb off" aria-label="Info"><svg><use href="#info3d"/></svg></button>
        <button class="tb off" aria-label="Oberflächen"><svg><use href="#brush"/></svg></button>
        <button class="tb" aria-label="Etikett"><svg><use href="#tag"/></svg></button>
      </div>
      <i class="sep"></i>
      <button class="tb" aria-label="Layout"><svg><use href="#sheet"/></svg></button>
      <button class="tb dd" aria-label="Mehr"><svg><use href="#chev-d"/></svg></button>
      <button class="tb" aria-label="Analyse"><svg><use href="#circtri"/></svg></button>
      <button class="tb dd" aria-label="Mehr"><svg><use href="#chev-d"/></svg></button>
    </div>
  </header>

  <div class="options">
    <div class="options-title">Haupt:</div>
    <div class="options-row">
      <i class="vgrip"></i>
      <button class="pill" aria-label="Polygon"><svg class="i18"><use href="#poly"/></svg><svg class="chev"><use href="#chev-r"/></svg></button>
      <button class="pill" aria-label="Auswahl"><svg class="i18"><use href="#boxsel"/></svg><svg class="chev"><use href="#chev-r"/></svg></button>
      <button class="pill on" aria-label="Magnet"><svg class="i18"><use href="#magnet"/></svg></button>
      <button class="pill tall" aria-label="Pfeil"><svg class="i16"><use href="#cursor"/></svg><svg class="chev"><use href="#chev-r"/></svg></button>
    </div>
  </div>

  <div class="work">
    <nav class="toolbox" aria-label="Werkzeugkasten">
      <i class="handle"></i>
      <button class="tool sel"><svg><use href="#cursor"/></svg>Pfeil</button>
      <button class="tool strong marq"><svg><use href="#t-marq"/></svg>Markierungsrah...</button>
      <h2 class="sect"><i class="tri"></i>Planung</h2>
      <ul class="tool-list">
        <li><button class="tool"><svg><use href="#t-wall"/></svg>Wand</button></li>
        <li><button class="tool"><svg><use href="#t-door"/></svg>Tür</button></li>
        <li><button class="tool"><svg><use href="#t-win"/></svg>Fenster</button></li>
        <li><button class="tool"><svg><use href="#t-slab"/></svg>Decke</button></li>
        <li><button class="tool"><svg><use href="#t-col"/></svg>Stütze</button></li>
        <li><button class="tool"><svg><use href="#t-beam"/></svg>Träger</button></li>
        <li><button class="tool"><svg><use href="#t-roof"/></svg>Dach</button></li>
        <li><button class="tool"><svg><use href="#t-shell"/></svg>Schale</button></li>
        <li><button class="tool"><svg><use href="#t-sky"/></svg>Dachfenster</button></li>
        <li><button class="tool"><svg><use href="#t-curt"/></svg>Fassade</button></li>
        <li><button class="tool"><svg><use href="#t-stair"/></svg>Treppe</button></li>
        <li><button class="tool"><svg><use href="#t-rail"/></svg>Geländer</button></li>
        <li><button class="tool"><svg><use href="#t-chair"/></svg>Objekt</button></li>
        <li><button class="tool"><svg><use href="#t-light"/></svg>Lichtquelle</button></li>
        <li><button class="tool"><svg><use href="#t-wend"/></svg>Wandabschluss</button></li>
        <li><button class="tool"><svg><use href="#t-morph"/></svg>Morph</button></li>
        <li><button class="tool"><svg><use href="#t-mesh"/></svg>Freifläche</button></li>
        <li><button class="tool"><svg><use href="#t-open"/></svg>Öffnung</button></li>
        <li><button class="tool"><svg><use href="#t-room"/></svg>Raum</button></li>
      </ul>
      <h2 class="sect"><i class="tri"></i>Sichten</h2>
      <ul class="tool-list">
        <li><button class="tool"><svg><use href="#t-sec"/></svg>Schnitt</button></li>
        <li><button class="tool"><svg><use href="#t-elev"/></svg>Ansicht</button></li>
        <li><button class="tool"><svg><use href="#t-int"/></svg>Innenansicht</button></li>
        <li><button class="tool"><svg><use href="#t-det"/></svg>Detail</button></li>
        <li><button class="tool"><svg><use href="#t-work"/></svg>Arbeitsblatt</button></li>
        <li><button class="tool"><svg><use href="#t-cam"/></svg>Kamera</button></li>
      </ul>
      <h2 class="sect"><i class="tri"></i>Dokumentation</h2>
      <div class="doc-tools">
        <ul class="tool-list">
          <li><button class="tool strong"><svg viewBox="0 0 28 20"><use href="#t-dim"/><text class="mini" x="14" y="9">1.2</text></svg>Bemaßung</button></li>
          <li><button class="tool"><svg viewBox="0 0 28 20"><use href="#t-lvl"/><text class="mini" x="23" y="8">1.2</text></svg>Höhenbemaß...</button></li>
        </ul>
        <div class="scroll"><i></i></div>
      </div>
    </nav>

    <main class="center">
      <div class="tabs" role="tablist">
        <button class="tab-home" aria-label="Übersicht"><svg><use href="#win4"/></svg></button>
        <button class="tab" role="tab"><svg><use href="#plan"/></svg>0. EG [0. EG]</button>
        <button class="tab" role="tab"><svg><use href="#box3"/></svg>(!) Allgemeine Perspektive [3D / Alle]</button>
        <button class="tab current" role="tab"><svg><use href="#ibeam"/></svg>[Quadratischer Querschnitt]</button>
        <i class="tab-space"></i>
        <button class="tab-map" aria-label="Navigator"><svg><use href="#hmap"/></svg><svg class="chev"><use href="#chev-d"/></svg></button>
      </div>

      <div class="canvas">
        <svg class="drawing" viewBox="135 112 1292 785" preserveAspectRatio="xMidYMid meet">
          <path d="M467 240H988V735H467z" stroke="#c9c9c9" stroke-width="4"/>
          <path d="M467 240H988V735H467z" stroke="#111" stroke-width="1.500"/>
          <path d="M467 487H988" stroke="#aaa" stroke-width="4"/>
          <path d="M467 487H988" stroke="#333" stroke-width="1.500"/>
          <path d="M480 735 975 240" stroke="#333"/>
          <g stroke="#8b8b8b" stroke-width="2">
            <path d="M731 242V487M727 487V732"/>
            <path d="M724 248l6-8 4 8zM724 727h8l-4 7zM724 480h10l-6 8zM724 495h8l-4-7z" fill="#8b8b8b" stroke-width="1"/>
            <path d="M726 359h9v9h-9zM722 607h9v9h-9z" fill="#fff"/>
          </g>
          <path d="m723 483 8 8m0-8-8 8" stroke="#8a5560"/>
          <path d="M738 363H824" stroke="#999" stroke-dasharray="1 1"/>
          <g class="dimtext">
            <text transform="translate(727 302) rotate(-90)">Breite 1</text>
            <text transform="translate(747 302) rotate(-90)">(0,038)</text>
            <text transform="translate(727 426) rotate(-90)">Breite 4</text>
            <text transform="translate(747 426) rotate(-90)">(0,038)</text>
            <text transform="translate(724 550) rotate(-90)">Breite 3</text>
            <text transform="translate(744 550) rotate(-90)">(0,038)</text>
            <text transform="translate(724 673) rotate(-90)">Breite 2</text>
            <text transform="translate(744 673) rotate(-90)">(0,038)</text>
          </g>
        </svg>
        <i class="dock top"></i><i class="dock bottom"></i><i class="dock left"></i><i class="dock right"></i>

        <section class="palette" aria-label="Profil-Manager">
          <header class="pal-title"><button class="close" aria-label="Schließen"></button>Profil-Manager</header>
          <h2 class="sect"><i class="tri"></i>Profile verwalten</h2>
          <div class="pal-body">
            <div class="line between"><label for="profil">Profil:</label><button class="mini-btn" aria-label="Stifte"><svg><use href="#pencil2"/></svg></button></div>
            <div class="combo">
              <svg class="swatch" viewBox="0 0 19 17"><rect x=".5" y=".5" width="18" height="16" fill="url(#hatch)" stroke="#222"/><path d="M0 8.500h19" stroke="#222"/></svg>
              <select id="profil"><option>Quadratischer Querschnitt</option></select>
              <svg class="chev"><use href="#chev-r"/></svg>
            </div>
            <div class="prof-grid">
              <div class="prof-left">
                <div class="acts">
                  <button aria-label="Neu"><svg><use href="#plusc"/></svg></button>
                  <button aria-label="Umbenennen"><svg><use href="#rename"/></svg></button>
                  <button aria-label="Löschen"><svg><use href="#redx"/></svg></button>
                </div>
                <button class="btn" disabled>Sichern</button>
                <div class="avail">Verfügbar für:</div>
                <div class="use">
                  <button class="on" aria-label="Wand"><svg viewBox="0 0 28 20"><use href="#t-wall"/></svg></button>
                  <button class="on" aria-label="Träger"><svg viewBox="0 0 28 20"><use href="#t-beam"/></svg></button>
                  <button class="on" aria-label="Stütze"><svg viewBox="0 0 28 20"><use href="#t-col"/></svg></button>
                  <button aria-label="Geländer"><svg viewBox="0 0 28 20"><use href="#t-rail"/></svg></button>
                  <button aria-label="Objekt"><svg viewBox="0 0 28 20"><use href="#t-chair"/></svg></button>
                  <button aria-label="Info"><svg class="i20"><use href="#ico-info"/></svg></button>
                </div>
              </div>
              <div class="preview">
                <svg viewBox="0 0 92 88"><rect x="1" y="1" width="90" height="86" fill="url(#hatch)" stroke="#111" stroke-width="2"/><path d="M0 44h92" stroke="#111"/><path d="m44 42 4 4m0-4-4 4" stroke="#111" stroke-width="2"/></svg>
              </div>
            </div>
          </div>
          <hr>
          <div class="pal-body">
            <div class="elem">Elementauswahl:</div>
            <div class="two"><button class="btn">Aufnehmen</button><button class="btn">Anwenden</button></div>
          </div>
          <h2 class="sect"><i class="tri"></i>Ebenen</h2>
          <ul class="layers">
            <li class="sel"><i></i><svg><use href="#eye"/></svg><svg><use href="#l-prof"/></svg>Profil</li>
            <li><i></i><svg><use href="#eye"/></svg><svg><use href="#l-help"/></svg>Hilfskonstruktion</li>
            <li><i></i><svg><use href="#eye"/></svg><svg><use href="#l-str"/></svg>Streckungs-Modifikatoren</li>
            <li><i></i><svg><use href="#eye"/></svg><svg><use href="#l-nom"/></svg>Nominale Breite/Höhe</li>
            <li><i></i><svg><use href="#eye"/></svg><svg><use href="#l-abs"/></svg>Abstands-Modifikatoren</li>
            <li class="dim"><input type="checkbox" id="oeff"><svg><use href="#eye"/></svg><svg><use href="#l-open"/></svg><label for="oeff">Öffnungsreferenz</label></li>
          </ul>
          <div class="mods">
            <h2 class="sect"><i class="tri"></i>Modifikatoren</h2>
            <div class="mods-view">
              <table>
                <thead><tr><th class="c1"></th><th class="c2">Name</th><th class="c3"></th><th class="c4"><svg aria-label="Wert"><use href="#hdim"/></svg></th></tr></thead>
                <tbody>
                  <tr><td><input type="checkbox" aria-label="Breite strecken"></td><td colspan="2">Breite strecken</td><td class="val">---</td></tr>
                  <tr><td><input type="checkbox" aria-label="Höhe strecken"></td><td colspan="2">Höhe strecken</td><td class="val">---</td></tr>
                  <tr class="thin"><td colspan="4"></td></tr>
                  <tr class="thin"><td colspan="4"></td></tr>
                  <tr><td><svg><use href="#m-flag"/></svg></td><td colspan="2">Breite 1</td><td class="val">0,038</td></tr>
                  <tr><td><svg><use href="#m-flag"/></svg></td><td colspan="2">Breite 2</td><td class="val">0,038</td></tr>
                  <tr><td><svg><use href="#m-flag"/></svg></td><td colspan="2">Breite 3</td><td class="val">0,038</td></tr>
                  <tr><td><svg><use href="#m-flag"/></svg></td><td colspan="2">Breite 4</td><td class="val">0,038</td></tr>
                </tbody>
              </table>
            </div>
            <div class="acts mods-acts">
              <button aria-label="Hinzufügen"><svg><use href="#m-add"/></svg></button>
              <button class="faded" aria-label="Löschen"><svg><use href="#redx"/></svg></button>
            </div>
          </div>
          <h2 class="sect"><i class="tri shut"></i>Komponenten - Grundeinst.</h2>
          <h2 class="sect"><i class="tri shut"></i>Einheitliche Profilkonturen</h2>
        </section>
      </div>

      <div class="quick">
        <div class="quick-nav">
          <button aria-label="Zurück"><svg><use href="#v-back"/></svg></button>
          <button class="off" aria-label="Vor"><svg><use href="#v-fwd"/></svg></button>
          <button aria-label="Zoom"><svg><use href="#v-zoom"/></svg></button>
        </div>
        <button class="q first"><svg><use href="#v-fit"/></svg><span>keine Daten</span><svg class="chev"><use href="#chev-r"/></svg></button>
        <button class="q"><svg><use href="#v-rot"/></svg><span>keine Daten</span><svg class="chev"><use href="#chev-r"/></svg></button>
        <button class="q live"><svg><use href="#v-scale"/></svg><span>1:100</span><svg class="chev"><use href="#chev-r"/></svg></button>
        <button class="q"><svg><use href="#v-lay"/></svg><span>keine Daten</span><svg class="chev"><use href="#chev-r"/></svg></button>
        <button class="q"><svg><use href="#v-hatch"/></svg><span>keine Daten</span><svg class="chev"><use href="#chev-r"/></svg></button>
        <button class="q"><svg><use href="#v-pen"/></svg><span>keine Daten</span><svg class="chev"><use href="#chev-r"/></svg></button>
        <button class="q"><svg><use href="#v-frame"/></svg><span>keine Daten</span><svg class="chev"><use href="#chev-r"/></svg></button>
        <button class="q"><svg><use href="#v-rep"/></svg><span>keine Daten</span><svg class="chev"><use href="#chev-r"/></svg></button>
        <button class="q"><svg><use href="#v-ren"/></svg><span>keine Daten</span><svg class="chev"><use href="#chev-r"/></svg></button>
        <button class="q"><svg><use href="#stackh"/></svg><span>keine Daten</span><svg class="chev"><use href="#chev-r"/></svg></button>
        <button class="q"><svg><use href="#v-dim"/></svg><span>keine Daten</span><svg class="chev"><use href="#chev-r"/></svg></button>
      </div>
    </main>

    <aside class="side">
      <i class="handle"></i>
      <div class="side-tabs">
        <button class="tb" aria-label="Projekt"><svg><use href="#house"/></svg></button>
        <i class="sep"></i>
        <button class="tb" aria-label="Ausschnitte"><svg><use href="#framed"/></svg></button>
        <button class="tb" aria-label="Layouts"><svg><use href="#layout"/></svg></button>
        <button class="tb on" aria-label="Publisher"><svg><use href="#books"/></svg></button>
        <button class="wbtn more" aria-label="Menü"><svg><use href="#burger"/></svg><svg class="chev"><use href="#chev-r"/></svg></button>
      </div>
      <div class="side-pick">
        <button class="wbtn up off" aria-label="Nach oben"><svg><use href="#uparr"/></svg></button>
        <button class="wbtn sets"><svg><use href="#books"/></svg><b>Publisher-Sets</b><svg class="chev"><use href="#chev-r"/></svg></button>
      </div>
      <label class="search"><svg><use href="#mag"/></svg><input type="text" placeholder="Publisher-Sets durchsuc" aria-label="Publisher-Sets durchsuchen"></label>
      <ul class="sets-list">
        <li class="sel"><svg><use href="#books"/></svg>Beispiel BIMx</li>
        <li><svg><use href="#books"/></svg>Beispiel DWG</li>
        <li><svg><use href="#books"/></svg>Beispiel IFC</li>
        <li><svg><use href="#books"/></svg>Beispiel PDF</li>
        <li><svg><use href="#books"/></svg>Beispiel SAF</li>
      </ul>
      <div class="acts side-acts">
        <button aria-label="Neu"><svg><use href="#plusc"/></svg></button>
        <button aria-label="Duplizieren"><svg><use href="#plus2"/></svg></button>
        <button aria-label="Eigenschaften"><svg><use href="#listb"/></svg></button>
        <button aria-label="Löschen"><svg><use href="#redx"/></svg></button>
      </div>
      <h2 class="sect"><i class="tri"></i>Einstellungen</h2>
      <div class="set-rows">
        <label class="set-row"><svg><use href="#books"/></svg><input type="text" value="Beispiel BIMx" aria-label="Name"></label>
        <div class="set-row"><svg><use href="#ff"/></svg><span>BIMx Hyper-Modell hochl...</span><button class="wbtn tiny" aria-label="Mehr"><svg class="chev"><use href="#chev-r"/></svg></button></div>
        <button class="btn">Einstellungen...</button>
      </div>
      <div class="publish"><button class="btn">Publizieren</button><button class="wbtn" aria-label="Optionen"><svg><use href="#listdots"/></svg><svg class="chev"><use href="#chev-r"/></svg></button></div>
      <div class="tracing">
        <i class="handle"></i>
        <div class="trace-top"><button class="wbtn sq" aria-label="Transparentpause"><svg class="i20"><use href="#trace"/></svg></button><button class="wbtn wide" aria-label="Referenz"><svg class="chev"><use href="#chev-r"/></svg></button></div>
        <div class="trace-acts">
          <button aria-label="Tauschen"><svg><use href="#tswap"/></svg></button><i></i>
          <button aria-label="Verschieben"><svg><use href="#tmove"/></svg></button>
          <button aria-label="Drehen"><svg><use href="#trot"/></svg></button>
          <button aria-label="Zurücksetzen"><svg><use href="#tback"/></svg></button>
          <button aria-label="Aktualisieren"><svg><use href="#tsync"/></svg></button>
        </div>
        <div class="trace-set">
          <label for="tp">Transparentpause:</label>
          <div class="slide"><button class="wbtn sq" aria-label="Farbe"><i class="red"></i><svg class="chev"><use href="#chev-r"/></svg></button><input id="tp" type="range" value="100"><button class="wbtn thin" aria-label="Mehr"><svg class="chev"><use href="#chev-r"/></svg></button></div>
          <label for="ak">Aktiv:</label>
          <div class="slide"><button class="wbtn sq" aria-label="Farben"><svg class="i13"><use href="#wheel"/></svg><svg class="chev"><use href="#chev-r"/></svg></button><input id="ak" type="range" value="100"><i class="blank"></i></div>
        </div>
        <div class="trace-foot">
          <button aria-label="Ziehen"><svg><use href="#thand"/></svg></button>
          <button aria-label="Überlagern"><svg><use href="#tdup"/></svg></button>
          <button aria-label="Teilen"><svg><use href="#tsplit"/></svg></button>
          <button aria-label="Ausblenden"><svg><use href="#thide"/></svg></button>
        </div>
      </div>
    </aside>
  </div>

  <footer class="status">
    <span class="hint">Klicken Sie mit dem Cursor auf ein Element oder ziehen Sie einen Auswahlbereich auf. Drücken Sie für Morphbearbeitung Strg/Ctrl+Umsch, um zwischen Element-/Unterelement-Auswahl zu wechseln.</span>
    <svg><use href="#conn"/></svg><i class="bar"></i>
    <a class="gs" href="#id"><span>GRAPHISOFT</span> ID</a>
  </footer>
</div>
</body>
</html>
```
FILE: styles.css
```css
* { box-sizing: border-box; }
body { margin: 0; font: 11px/16px Roboto, "Liberation Sans", sans-serif; color: #242424; background: #ebebeb; }
button, input, select { font: inherit; color: inherit; margin: 0; padding: 0; border: 0; background: none; }
button { display: flex; align-items: center; justify-content: center; white-space: nowrap; }
ul { list-style: none; margin: 0; padding: 0; }
h2 { margin: 0; font: inherit; }
i { display: block; font-style: normal; flex: none; }
svg { display: block; flex: none; width: 20px; height: 20px; fill: none; stroke: currentColor; stroke-width: 1; }
.b { stroke: #3b7bf6; }
.defs { position: absolute; width: 0; height: 0; }
.app { display: flex; flex-direction: column; height: 100vh; overflow: hidden; }
button svg.chev, svg.chev { width: 8px; height: 8px; }
svg.i18 { width: 18px; height: 18px; }
svg.i16 { width: 16px; height: 16px; }

/* Main toolbar */
.topbar { background: #e5e5e5; border-bottom: 1px solid #dcdcdc; height: 34px; flex: none; }
.tools { display: flex; align-items: center; width: max-content; height: 33px; padding: 0 2px 1px; background: #ebebeb; }
.grip { width: 1px; height: 14px; background: #aaa; margin-right: 3px; }
.tb { width: 28px; height: 28px; flex: none; color: #26333d; }
.tb svg { width: 20px; height: 20px; }
.tb.off svg { opacity: .45; }
.tb.on { background: #bebdc2; border-radius: 4px; border-right: 1px solid #ebebeb; }
.tb.dd { width: 15px; color: #111; }
.tb.dd svg { width: 8px; height: 8px; }
.sep { width: 1px; height: 20px; margin: 0 5px 0 6px; background: #d2d2d2; }
.spread { display: flex; justify-content: space-between; width: 308px; }

/* Tool options */
.options { height: 58px; flex: none; border-bottom: 1px solid #dfdfdf; }
.options-title { font-size: 10px; line-height: 16px; padding: 0 8px; }
.options-row { display: flex; align-items: flex-end; gap: 2px; padding-left: 2px; height: 33px; }
.vgrip { width: 1px; height: 22px; margin: 0 3px 10px 0; background: #aaa; }
.pill { gap: 5px; width: 38px; height: 18px; padding-left: 3px; border-radius: 4px; background: #fff; box-shadow: 0 1px 1px #ccc; color: #222; }
.pill.on { padding: 0; background: #bebdc2; box-shadow: none; }
.pill.tall { width: 45px; height: 27px; gap: 10px; }

.work { display: flex; flex: 1; min-height: 0; }

/* Section headers */
.sect { display: flex; align-items: center; height: 19px; margin: 1px 0; padding-left: 5px; gap: 7px; background: #d4d4d4; border-radius: 2px; white-space: nowrap; }
.tri { width: 8px; height: 7px; background: #8c8c8c; clip-path: polygon(0 0, 100% 0, 50% 100%); }
.tri.shut { clip-path: polygon(0 0, 100% 50%, 0 100%); }
.handle { height: 1px; background: #a8a8a4; }

/* Toolbox */
.toolbox { display: flex; flex-direction: column; width: 135px; flex: none; background: #f4f1ed; border-right: 1px solid #dcdcdc; overflow: hidden; }
.toolbox > * { flex: none; }
.toolbox .handle { width: 51px; margin: 4px auto 2px 41px; }
.tool { width: 100%; height: 100%; justify-content: flex-start; gap: 7px; padding-left: 7px; color: #757472; }
.tool svg { width: 28px; height: 20px; color: #777b7e; }
.tool.sel { height: 25px; width: 133px; background: #bebdc2; border-radius: 4px; color: #222; }
.tool.sel svg { height: 17px; color: #333; }
.tool.strong { color: #000; }
.tool.strong svg { color: #333; }
.tool.marq { height: 27px; }
.tool-list li { height: 26px; }
.tool-list li:nth-child(even) { height: 27px; }
.mini { font: 700 7px Roboto, sans-serif; fill: currentColor; stroke: none; text-anchor: middle; }
.toolbox .doc-tools { display: flex; flex: 1 1 0; min-height: 0; overflow: hidden; }
.doc-tools .tool-list { flex: 1; min-width: 0; }
.scroll { width: 9px; height: 28px; padding: 3px 2px; background: #fff; }
.scroll i { width: 6px; height: 14px; border-radius: 3px; background: #777; }

/* Tabs */
.center { display: flex; flex-direction: column; flex: 1; min-width: 0; }
.tabs { display: flex; height: 20px; flex: none; background: #e4e4e4; }
.tabs svg { width: 18px; height: 17px; }
.tab-home { width: 31px; border-right: 1px solid #b5b5b5; color: #444; }
.tab { flex: 0 1 284px; gap: 3px; color: #3c3c3c; border-right: 1px solid #b5b5b5; }
.tab.current { background: #fff; border: 0; }
.tab:has(+ .current) { border: 0; }
.tab-space { flex: 1; }
.tab-map { width: 47px; gap: 6px; background: #f8f8f8; }

/* Canvas */
.canvas { position: relative; flex: 1; min-height: 0; background: #fff; }
.drawing { width: 100%; height: 100%; }
.dimtext { font: 12px "Liberation Sans", Arial, sans-serif; fill: #858585; stroke: none; text-anchor: middle; }
.dock { position: absolute; width: 30px; height: 15px; background: #f3f3f3; border-radius: 3px; }
.dock::before { content: ""; position: absolute; inset: 7px 3px; height: 1px; background: repeating-linear-gradient(90deg, #f0a367 0 5px, transparent 5px 7px); }
.dock.top { top: 1px; left: calc(50% - 15px); }
.dock.bottom { bottom: 1px; left: calc(50% - 15px); }
.dock.left, .dock.right { width: 15px; height: 30px; top: calc(50% - 15px); }
.dock.left { left: 1px; }
.dock.right { right: 0; }
.dock.left::before, .dock.right::before { inset: 3px 7px; width: 2px; height: auto; background: repeating-linear-gradient(#f6cba6 0 5px, transparent 5px 7px); }

/* Profile manager */
.palette { position: absolute; top: 44px; right: 107px; width: 242px; padding-bottom: 2px; background: #ebebeb; box-shadow: 0 0 1px #bbb; }
.pal-title { position: relative; height: 15px; line-height: 15px; text-align: center; padding-left: 16px; background: #e5e5e5; }
.close { position: absolute; left: 4px; top: 3px; width: 9px; height: 9px; border-radius: 50%; background: #ec6a5e; }
.palette .sect { height: 20px; margin: 2px 3px; padding-left: 6px; gap: 7px; }
.pal-title + .sect { margin-top: 4px; }
.pal-body { padding: 0 3px 0 4px; }
.line { display: flex; align-items: center; height: 22px; }
.line label { align-self: flex-start; }
.between { justify-content: space-between; }
.mini-btn { width: 26px; height: 20px; border-radius: 4px; background: #fff; box-shadow: 0 0 1px #aaa; }
.mini-btn svg { width: 18px; height: 18px; }
.combo { display: flex; align-items: center; height: 27px; margin: 2px 0 4px; padding: 0 3px 0 10px; gap: 5px; border-radius: 4px; background: #fff; box-shadow: 0 1px 1px #ccc; }
.combo .swatch { width: 19px; height: 17px; stroke: none; }
.combo select { flex: 1; appearance: none; outline: 0; }
.prof-grid { display: flex; justify-content: space-between; }
.prof-left { width: 113px; }
.acts { display: flex; align-items: center; height: 26px; }
.acts button { width: 28px; height: 20px; color: #333; }
.acts svg { width: 16px; height: 16px; }
.btn { width: 100%; height: 19px; border-radius: 4px; background: #fff; box-shadow: 0 1px 1px #c4c4c4; }
.btn:disabled { color: #b9b9b9; background: #f4f4f4; }
.avail { margin: 15px 0 3px; }
.use { display: grid; grid-template-columns: 27px 27px 27px; gap: 1px; }
.use button { height: 23px; border-radius: 4px; color: #222; }
.use .on { background: #bebdc2; }
.use svg { width: 22px; height: 17px; }
.use svg.i20 { width: 18px; height: 18px; }
.preview { display: grid; place-items: center; width: 113px; height: 126px; background: #fff; border: 1px solid #888; }
.preview svg { width: 92px; height: 88px; stroke: none; }
.palette hr { margin: 6px 0 4px; border: 0; border-top: 1px solid #cfcfcf; }
.elem { margin-bottom: 4px; }
.two { display: grid; grid-template-columns: 1fr 1fr; gap: 10px; margin-bottom: 6px; }
.layers { background: #fff; margin: 0 1px; }
.layers li { display: flex; align-items: center; height: 19px; padding-left: 4px; gap: 4px; color: #111; }
.layers li.sel { background: #dcdcdc; }
.layers li > i { width: 12px; }
.layers svg { width: 18px; height: 18px; color: #26333d; }
.layers .dim { color: #b8b8b8; }
.layers .dim svg { color: #777; }
input[type="checkbox"] { appearance: none; display: block; width: 11px; height: 11px; border: 1px solid #222; background: #fff; }
.layers input { margin-right: 1px; }
.mods { position: relative; padding-top: 1px; }
.mods::after { content: ""; position: absolute; inset: -1px 2px -5px -3px; border: 4px solid #ee50ee; pointer-events: none; }
.mods-view { height: 177px; margin: 0 1px; background: linear-gradient(90deg, #fff 227px, #f6f6f6 227px); }
.mods table { width: 227px; border-collapse: collapse; table-layout: fixed; color: #111; }
.mods th { height: 14px; padding: 0 0 0 2px; line-height: 14px; font-weight: 400; text-align: left; border-right: 1px solid #ddd; }
.mods td { height: 20px; padding: 0 0 0 3px; line-height: 16px; border: 1px solid #dedede; border-width: 1px 0; }
.mods .c1 { width: 19px; }
.mods .c2 { width: 118px; }
.mods .c3 { width: 23px; }
.mods th svg { width: 16px; height: 14px; margin: 0 auto; color: #222; }
.mods td:first-child { padding: 0 0 0 1px; }
.mods td svg { width: 17px; height: 16px; }
.mods .thin td { height: 10px; line-height: 8px; }
.mods .val { text-align: center; color: #bdbdbd; }
.mods-acts { padding-left: 4px; }
.mods ~ .sect { margin-bottom: 0; }
.mods + .sect { margin-top: 5px; }
.mods ~ .sect + .sect { margin-top: 3px; }
.faded { opacity: .55; }

/* Quick options */
.quick { display: flex; height: 17px; flex: none; background: #ebebeb; color: #aaa; }
.quick-nav { display: flex; width: 68px; flex: none; color: #222; }
.quick-nav button { width: 22px; }
.quick svg { width: 16px; height: 16px; }
.quick svg.chev { width: 8px; height: 8px; color: #777; }
.quick .off { opacity: .45; }
.q { flex: 1 1 0; min-width: 0; padding: 0 5px 0 4px; border-left: 1px solid #d4d4d4; }
.q span { flex: 1; padding-left: 4px; }
.q > svg:first-child { color: #777; }
.q.first > svg:first-child, .q.live, .q.live > svg { color: #222; }
.q.live svg.chev { color: #111; }

/* Navigator */
.side { display: flex; flex-direction: column; width: 173px; flex: none; background: #ebebeb; border-left: 1px solid #dcdcdc; overflow: hidden; }
.side > * { flex: none; }
.side .handle { width: 66px; margin: 4px auto 3px 54px; }
.side-tabs { display: flex; align-items: center; height: 28px; padding: 0 1px 0 2px; }
.side-tabs .more { margin-left: auto; }
.wbtn { gap: 3px; width: 31px; height: 20px; flex: none; border-radius: 4px; background: #fff; box-shadow: 0 0 2px #bbb; }
.wbtn svg { width: 16px; height: 16px; }
.side-pick { display: flex; gap: 3px; margin: 6px 1px 4px 3px; }
.wbtn.up { width: 20px; background: #f4f4f4; color: #888; }
.wbtn.sets { flex: 1; padding: 0 2px 0 4px; gap: 4px; }
.sets b { flex: 1; text-align: left; font-size: 12px; font-weight: 700; }
.search { display: flex; align-items: center; gap: 6px; height: 20px; margin: 0 1px 2px 3px; padding-left: 6px; background: #fff; border-bottom: 1px solid #c4c4c4; }
.search svg { width: 14px; height: 14px; }
.search input { flex: 1; min-width: 0; outline: 0; }
.search input::placeholder { color: #bdbdbd; opacity: 1; }
.side .sets-list { flex: 1 1 0; min-height: 0; padding-right: 12px; background: linear-gradient(90deg, transparent calc(100% - 12px), #f5f5f5 calc(100% - 12px)), #fff; }
.sets-list li { display: flex; align-items: center; gap: 3px; height: 18px; padding-left: 2px; color: #111; }
.sets-list .sel { background: #dcdcdc; }
.sets-list svg { width: 13px; height: 13px; color: #444; }
.side-acts { height: 33px; padding-left: 3px; }
.side .sect { height: 20px; margin: 0 0 5px 3px; padding-left: 5px; gap: 8px; }
.set-rows { height: 138px; padding: 0 1px 0 3px; border-bottom: 1px solid #d2d2d2; }
.set-row { display: flex; align-items: center; height: 16px; gap: 5px; margin-bottom: 4px; }
.set-row svg:first-child { width: 14px; height: 14px; }
.set-row input { flex: 1; min-width: 0; height: 16px; padding-left: 3px; background: #fff; border-bottom: 1px solid #ccc; }
.set-row span { flex: 1; min-width: 0; white-space: nowrap; }
.set-row + .set-row { gap: 3px; margin-bottom: 22px; }
.wbtn.tiny { width: 12px; height: 12px; }
.set-row .wbtn svg.chev { width: 8px; height: 8px; }
.publish { display: flex; gap: 4px; padding: 4px 1px 3px 7px; border-bottom: 1px solid #dadada; }
.publish .btn { flex: 1; }
.side .tracing .handle { margin-bottom: 4px; }
.tracing .wbtn { background: #f3f3f3; box-shadow: 0 0 1px #bbb; color: #777; }
.tracing .chev { color: #666; }
.tracing .b { stroke: #9db8f5; }
.wbtn.sq { width: 26px; height: 26px; }
.wbtn.sq svg.i20 { width: 20px; height: 20px; }
.wbtn.sq svg.i13 { width: 13px; height: 13px; }
.tracing .wbtn.wide { flex: 1; height: 26px; justify-content: flex-end; padding-right: 2px; }
.trace-top { display: flex; gap: 2px; padding: 0 1px 0 3px; }
.trace-acts, .trace-foot { display: flex; padding-left: 3px; }
.trace-acts { height: 38px; border-bottom: 1px solid #d2d2d2; }
.trace-acts button, .trace-foot button { color: #777; }
.trace-acts button, .trace-acts i { width: 28px; }
.trace-acts svg, .trace-foot svg { width: 18px; height: 18px; }
.trace-set { padding: 5px 1px 2px 3px; color: #777; border-bottom: 1px solid #d2d2d2; }
.trace-set label { display: block; }
.slide { display: flex; justify-content: space-between; gap: 3px; margin: 4px 0; }
.slide .red { width: 12px; height: 12px; background: #f2998c; }
.slide .thin, .slide .blank { width: 12px; height: 26px; }
.slide .sq { gap: 2px; }
.slide input { appearance: none; flex: 1; min-width: 0; height: 20px; background: linear-gradient(#dedede, #dedede) 0 50% / 100% 3px no-repeat, repeating-linear-gradient(90deg, #d6d6d6 0 1px, transparent 1px 12px) 0 50% / 100% 8px no-repeat; }
.slide input::-webkit-slider-thumb { appearance: none; width: 8px; height: 16px; border-radius: 4px; background: #f6f6f6; box-shadow: 0 0 2px #999; }
.trace-foot { height: 35px; padding-left: 30px; }
.trace-foot button { width: 29px; }

/* Status bar */
.status { display: flex; align-items: center; height: 21px; flex: none; padding: 0 10px 0 5px; background: linear-gradient(#e9e9e9, #dcdcdc); border-top: 1px solid #d8d8d8; }
.hint { flex: 1; min-width: 0; white-space: nowrap; overflow: hidden; color: #111; }
.status svg { width: 16px; height: 16px; color: #222; }
.bar { width: 1px; height: 13px; margin: 0 10px 0 9px; background: #aaa; }
.gs { font: 13px/18px Lato, sans-serif; color: #26333d; text-decoration: none; }
.gs span { font-weight: 700; }
```
